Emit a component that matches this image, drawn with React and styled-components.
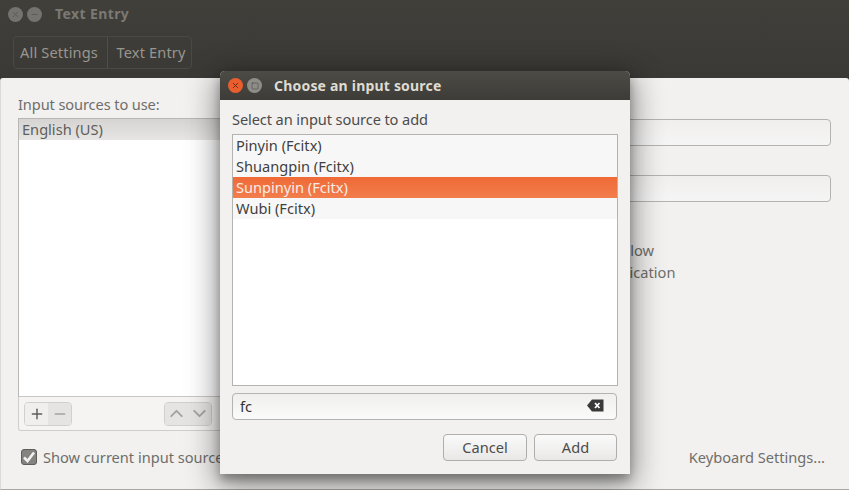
import React from 'react';
import styled, { createGlobalStyle } from 'styled-components';
import { Plus, Minus, ChevronUp, ChevronDown, X, Square } from 'lucide-react';

const Global = createGlobalStyle`
  html, body { margin: 0; padding: 0; background: #3c3b37; }
  * { box-sizing: border-box; }
  body { font-family: "Noto Sans", "Open Sans", sans-serif; font-size: 14.6px; }
`;

const Screen = styled.div`
  position: relative; width: 849px; height: 490px; overflow: hidden;
  display: flex; flex-direction: column;
  background: #3c3b37; color: #6f6e6a;
`;
const Header = styled.header`
  height: 78px; flex: none; display: flex; flex-direction: column;
  padding: 5px 0 0 8px; background: linear-gradient(#403f3a, #3a3935);
`;
const TitleBar = styled.div`
  height: 19px; display: flex; align-items: center; gap: 4px;
`;
const WinDot = styled.span`
  width: 15px; height: 15px; border-radius: 50%; flex: none;
  display: flex; align-items: center; justify-content: center;
  color: ${p => p.$fg || '#55534f'};
  background: ${p => p.$bg || '#75736f'};
`;
const WinTitle = styled.span`
  margin-left: 9px; padding-bottom: 2px; font-weight: 700; font-size: 14px; color: #7b7973; letter-spacing: .4px;
`;
const Crumbs = styled.nav`
  margin: 12px 0 0 5px; width: 179px; height: 33px; display: flex;
  border: 1px solid #4a4944; border-radius: 4px;
`;
const Crumb = styled.span`
  display: flex; align-items: center;
  width: ${p => p.$w}px; padding: 0 0 2px ${p => p.$pl}px;
  color: #989690; letter-spacing: .15px;
  & + & { border-left: 1px solid #4f4e49; }
`;
const Panel = styled.main`
  flex: 1; background: #f2f1f0; border-radius: 3px 3px 0 0;
  padding: 18px 18px 23px 17px; display: flex; flex-direction: column;
  border-left: 1px solid #dcdad7; border-bottom: 1px solid #a9a7a3;
`;
const Columns = styled.div`
  flex: 1; display: grid; grid-template-columns: 400px 1fr; gap: 20px; min-height: 0;
`;
const LeftCol = styled.section`
  display: flex; flex-direction: column; min-height: 0;
`;
const Label = styled.div`
  height: 22px; line-height: 16px; color: #6f6e6a; letter-spacing: -.1px;
`;
const SourceList = styled.div`
  flex: 1; background: #fff; border: 1px solid #b9b7b3; border-bottom-color: #c9c7c3;
`;
const SourceRow = styled.div`
  height: 21px; line-height: 21px; padding-left: 3px; color: #5f5e5a;
  background: linear-gradient(#d5d4d2, #e6e5e4);
`;
const ListTools = styled.div`
  height: 34px; flex: none; display: flex; align-items: center; justify-content: space-between;
  padding: 0 5px; background: #f5f4f3;
  border: 1px solid #cfcdca; border-top: 0; border-radius: 0 0 3px 3px;
  width: 400px;
`;
const ToolGroup = styled.div`
  width: 48px; height: 24px; display: flex; border: 1px solid #d2d0cd; border-radius: 4px;
  overflow: hidden;
`;
const ToolBtn = styled.span`
  flex: 1; display: flex; align-items: center; justify-content: center;
  background: ${p => (p.$on ? '#f0efee' : '#e5e4e2')};
  color: ${p => (p.$on ? '#5f5e5a' : '#a5a3a0')};
`;
const ToolLeft = styled.div`
  display: flex; align-items: center; justify-content: space-between; width: 188px;
`;
const RightCol = styled.section`
  display: flex; flex-direction: column; padding-top: 23px;
`;
const Field = styled.div`
  height: 27px; border: 1px solid #b5b3b0; border-radius: 4px;
  background: linear-gradient(#f0efee, #f6f5f5);
  margin-bottom: ${p => p.$mb}px;
`;
const Options = styled.div`
  margin-top: 38px; padding-left: 84px; display: flex; flex-direction: column;
`;
const Option = styled.div`
  height: 21.5px; line-height: 21px; white-space: nowrap; color: #6f6e6a;
`;
const BottomRow = styled.div`
  display: flex; justify-content: space-between; align-items: center; margin-top: 17px; height: 18px;
  padding: 0 6px 0 3px;
`;
const CheckRow = styled.label`
  display: flex; align-items: center; gap: 6px; color: #6f6e6a;
`;
const CheckBox = styled.span`
  width: 16px; height: 16px; border-radius: 3px; background: #85837f; border: 1px solid #5f5d59;
  display: flex; align-items: center; justify-content: center;
`;
const LinkText = styled.span`
  color: #6f6e6a;
`;
const Dialog = styled.div`
  position: absolute; left: 220px; top: 71px; width: 410px; height: 403px;
  display: flex; flex-direction: column; background: #f2f1f0;
  border-radius: 5px 5px 0 0;
  box-shadow: 0 6px 10px rgba(0,0,0,.28), 0 8px 30px 4px rgba(0,0,0,.42);
`;
const DialogBar = styled.div`
  height: 29px; flex: none; display: flex; align-items: center; gap: 4px; padding-left: 8px;
  border-radius: 5px 5px 0 0; background: linear-gradient(#4d4b45, #3d3c38);
`;
const DialogTitle = styled.span`
  margin-left: 8px; font-weight: 700; font-size: 14px; color: #dfdbd2; letter-spacing: .2px;
`;
const DialogBody = styled.div`
  flex: 1; display: flex; flex-direction: column; padding: 10px 12px 13px 12px; min-height: 0;
`;
const DialogLabel = styled.div`
  height: 24px; line-height: 18px; color: #4c4c4c; letter-spacing: -.1px;
`;
const ResultList = styled.div`
  flex: 1; background: #fff; border: 1px solid #b5b3b0; padding: 0;
`;
const ResultRow = styled.div`
  height: 21px; line-height: 21px; padding-left: 3px;
  color: ${p => (p.$sel ? '#f7ece5' : '#3f3f3f')};
  background: ${p => (p.$sel ? 'linear-gradient(#ef6a36, #f27d4d)' : '#f7f7f7')};
`;
const Search = styled.div`
  flex: none; margin-top: 7px; width: 385px; height: 27px; display: flex; align-items: center; justify-content: space-between;
  padding: 0 12px 2px 7px; border: 1px solid #b5b3b0; border-radius: 4px;
  background: linear-gradient(#f0efee, #fbfbfb); color: #333;
`;
const DialogActions = styled.div`
  flex: none; display: flex; justify-content: flex-end; gap: 7px; margin-top: 14px; padding-right: 1px;
`;
const ActionBtn = styled.button`
  width: ${p => p.$w}px; height: 27px; padding: 0 0 2px; border: 1px solid #b0aeab; border-radius: 4px;
  background: linear-gradient(#fafafa, #e9e8e7); color: #4c4c4c;
  font: inherit;
`;

const BackspaceIcon = () => (
  <svg width="17" height="13" viewBox="0 0 17 13">
    <path d="M5 0.5H16.5V12.5H5L0 6.5Z" fill="#3a3a3a" />
    <path d="M8 4L12.5 9M12.5 4L8 9" stroke="#fff" strokeWidth="1.8" />
  </svg>
);
const CheckIcon = () => (
  <svg width="14" height="14" viewBox="0 0 14 14">
    <path d="M2 7.5L5.5 11L12 2.5" fill="none" stroke="#f2f1f0" strokeWidth="2.6" />
  </svg>
);

export default function App() {
  return (
    <Screen>
      <Global />
      <Header>
        <TitleBar>
          <WinDot><X size={9} strokeWidth={2} /></WinDot>
          <WinDot><Minus size={9} strokeWidth={2} /></WinDot>
          <WinTitle>Text Entry</WinTitle>
        </TitleBar>
        <Crumbs>
          <Crumb $w={94} $pl={6}>All Settings</Crumb>
          <Crumb $w={84} $pl={8}>Text Entry</Crumb>
        </Crumbs>
      </Header>
      <Panel>
        <Columns>
          <LeftCol>
            <Label>Input sources to use:</Label>
            <SourceList><SourceRow>English (US)</SourceRow></SourceList>
            <ListTools>
              <ToolLeft>
                <ToolGroup>
                  <ToolBtn $on><Plus size={16} strokeWidth={2.2} /></ToolBtn>
                  <ToolBtn><Minus size={16} strokeWidth={2.2} /></ToolBtn>
                </ToolGroup>
                <ToolGroup>
                  <ToolBtn><ChevronUp size={21} strokeWidth={2.2} /></ToolBtn>
                  <ToolBtn><ChevronDown size={21} strokeWidth={2.2} /></ToolBtn>
                </ToolGroup>
              </ToolLeft>
            </ListTools>
          </LeftCol>
          <RightCol>
            <Field $mb={29} />
            <Field $mb={0} />
            <Options>
              <Option>Sources may follow</Option>
              <Option>Source per application</Option>
            </Options>
          </RightCol>
        </Columns>
        <BottomRow>
          <CheckRow><CheckBox><CheckIcon /></CheckBox>Show current input source in the menu bar</CheckRow>
          <LinkText>Keyboard Settings...</LinkText>
        </BottomRow>
      </Panel>
      <Dialog>
        <DialogBar>
          <WinDot $bg="#e95e2e" $fg="#5a2410"><X size={9} strokeWidth={2.2} /></WinDot>
          <WinDot $bg="#8f8d88" $fg="#45433f"><Square size={8} strokeWidth={1.6} /></WinDot>
          <DialogTitle>Choose an input source</DialogTitle>
        </DialogBar>
        <DialogBody>
          <DialogLabel>Select an input source to add</DialogLabel>
          <ResultList>
            <ResultRow>Pinyin (Fcitx)</ResultRow>
            <ResultRow>Shuangpin (Fcitx)</ResultRow>
            <ResultRow $sel>Sunpinyin (Fcitx)</ResultRow>
            <ResultRow>Wubi (Fcitx)</ResultRow>
          </ResultList>
          <Search>fc<BackspaceIcon /></Search>
          <DialogActions>
            <ActionBtn $w={84}>Cancel</ActionBtn>
            <ActionBtn $w={83}>Add</ActionBtn>
          </DialogActions>
        </DialogBody>
      </Dialog>
    </Screen>
  );
}
